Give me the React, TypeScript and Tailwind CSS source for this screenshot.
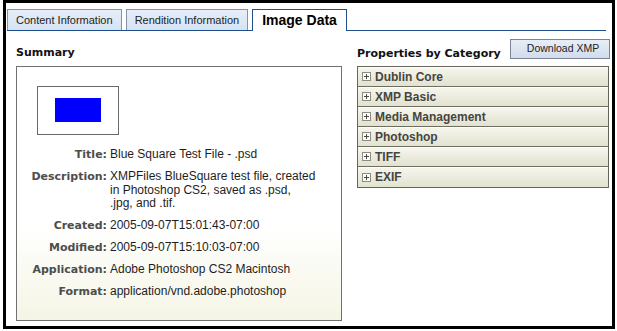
const tahoma = "font-['DejaVu_Sans',sans-serif]";
const arial = "font-['Liberation_Sans',Arial,sans-serif]";

const rows: { label: string; value: React.ReactNode }[] = [
  { label: 'Title:', value: 'Blue Square Test File - .psd' },
  {
    label: 'Description:',
    value: (
      <>
        XMPFiles BlueSquare test file, created
        <br />
        in Photoshop CS2, saved as .psd,
        <br />
        .jpg, and .tif.
      </>
    ),
  },
  { label: 'Created:', value: '2005-09-07T15:01:43-07:00' },
  { label: 'Modified:', value: '2005-09-07T15:10:03-07:00' },
  { label: 'Application:', value: 'Adobe Photoshop CS2 Macintosh' },
  { label: 'Format:', value: 'application/vnd.adobe.photoshop' },
];

const categories = ['Dublin Core', 'XMP Basic', 'Media Management', 'Photoshop', 'TIFF', 'EXIF'];

const PlusBox = () => (
  <svg width="9" height="9" viewBox="0 0 9 9" className="shrink-0">
    <rect x="0.5" y="0.5" width="8" height="8" fill="#fbfbf6" stroke="#8c8c84" />
    <path d="M2 4.5h5M4.5 2v5" stroke="#4a4a44" strokeWidth="1" />
  </svg>
);

const App = () => {
  return (
    <div className="w-[617px] h-[331px] bg-white">
      <div className="ml-[3px] w-[612px] h-[329px] border-[3px] border-black bg-white">
        {/* tabs */}
        <div className={`mt-[6px] ml-px mr-[6px] h-[22px] flex items-end gap-[4px] border-b border-[#1f4e8c] ${arial}`}>
          <div className="h-[21px] px-[8px] flex items-center border border-b-0 border-[#8494a8] bg-[linear-gradient(to_bottom,#e6eef8,#d6e3f3)] text-[11px] text-[#222]">
            Content Information
          </div>
          <div className="h-[21px] px-[8px] flex items-center border border-b-0 border-[#8494a8] bg-[linear-gradient(to_bottom,#e6eef8,#d6e3f3)] text-[11px] text-[#222]">
            Rendition Information
          </div>
          <div className="h-[22px] -mb-px px-[9px] flex items-center border border-b-0 border-[#1f4e8c] bg-white text-[14px] font-bold text-black">
            Image Data
          </div>
        </div>

        <div className="flex pl-[10px] pr-[2px] pt-[8px] gap-[15px]">
          {/* summary */}
          <div className="w-[326px]">
            <div className="h-[20px] flex items-end">
              <h2 className={`${tahoma} font-bold text-[11px] leading-[13px] text-[#111]`}>Summary</h2>
            </div>
            <div className="mt-[7px] h-[255px] border border-[#707070] pt-[19px] bg-[linear-gradient(to_bottom,#ffffff_62%,#f5f5e6)]">
              <div className="ml-[20px] w-[82px] h-[49px] border border-[#6a6a6a] bg-white pl-[17px] pt-[11px]">
                <div className="w-[46px] h-[24px] bg-[#0000ff]" />
              </div>
              <div className="mt-[13px]">
                {rows.map((r) => (
                  <div key={r.label} className="flex items-baseline mb-[8.5px]">
                    <div className={`w-[90px] shrink-0 text-right ${tahoma} font-bold text-[11px] leading-[13.5px] text-[#4d4d4d]`}>
                      {r.label}
                    </div>
                    <div className={`pl-[3px] ${arial} text-[12px] leading-[13.5px] text-[#1e1e1e]`}>{r.value}</div>
                  </div>
                ))}
              </div>
            </div>
          </div>

          {/* properties */}
          <div className="w-[253px]">
            <div className="h-[20px] flex items-end justify-between">
              <h2 className={`${tahoma} font-bold text-[11px] leading-[13px] text-[#111] -mb-px`}>Properties by Category</h2>
              <button className={`w-[100px] h-[20px] pl-[6px] flex items-center justify-center border border-[#7b8798] bg-[linear-gradient(to_bottom,#e8eef7,#d2dcea)] ${arial} text-[10.5px] text-[#222]`}>
                Download XMP
              </button>
            </div>
            <div className="mt-[7px] w-[252px] border border-[#66665c]">
              {categories.map((c, i) => (
                <div
                  key={c}
                  className={`h-[20px] flex items-center gap-[4px] pl-[4px] bg-[linear-gradient(to_bottom,#f6f6ee,#e2e2d0)] shadow-[inset_0_1px_0_#ffffff] ${
                    i < categories.length - 1 ? 'border-b border-[#6d6d62]' : ''
                  }`}
                >
                  <PlusBox />
                  <span className={`${arial} font-bold text-[12px] text-[#454540]`}>{c}</span>
                </div>
              ))}
            </div>
          </div>
        </div>
      </div>
    </div>
  );
};

export default App;
